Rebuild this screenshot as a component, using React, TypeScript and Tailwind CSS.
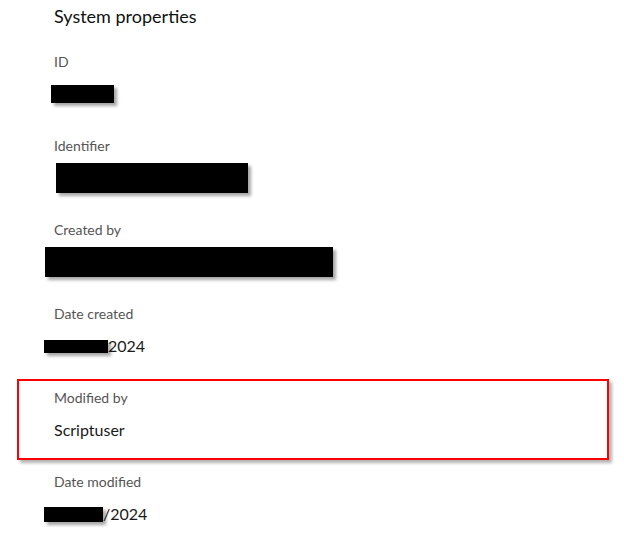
const redact = 'bg-black shadow-[3px_3px_3px_rgba(0,0,0,0.35)] shrink-0'

type Prop = {
  label: string
  value: React.ReactNode
  highlight?: boolean
}

const props: Prop[] = [
  { label: 'ID', value: <div className={`${redact} ml-[-3px] w-[63px] h-[18px]`} /> },
  { label: 'Identifier', value: <div className={`${redact} ml-[2px] w-[192px] h-[30px]`} /> },
  { label: 'Created by', value: <div className={`${redact} ml-[-9px] w-[288px] h-[30px]`} /> },
  {
    label: 'Date created',
    value: (
      <>
        <div className={`${redact} ml-[-10px] w-[64px] h-[13px]`} />
        <span>2024</span>
      </>
    ),
  },
  { label: 'Modified by', value: <span>Scriptuser</span>, highlight: true },
  {
    label: 'Date modified',
    value: (
      <>
        <div className={`${redact} ml-[-10px] w-[59px] h-[15px]`} />
        <span>/2024</span>
      </>
    ),
  },
]

export default function App() {
  return (
    <div className="w-[624px] h-[540px] bg-white overflow-hidden pl-[54px] pt-[2px] font-['Lato','Liberation_Sans',sans-serif]">
      <h2 className="text-[18px] leading-[28px] text-[#111]">System properties</h2>

      <div className="mt-[22px] flex flex-col gap-[30px]">
        {props.map((p) => (
          <div key={p.label} className="relative flex flex-col">
            {p.highlight && (
              <div className="absolute left-[-37px] top-[-9px] w-[592px] h-[81px] border-2 border-[#ff0000] shadow-[3px_3px_3px_rgba(0,0,0,0.3)] pointer-events-none" />
            )}
            <span className="text-[14px] leading-5 text-[#555]">{p.label}</span>
            <div className="mt-[10px] h-6 flex items-center text-[16px] leading-6 text-[#1a1a1a]">
              {p.value}
            </div>
          </div>
        ))}
      </div>
    </div>
  )
}
